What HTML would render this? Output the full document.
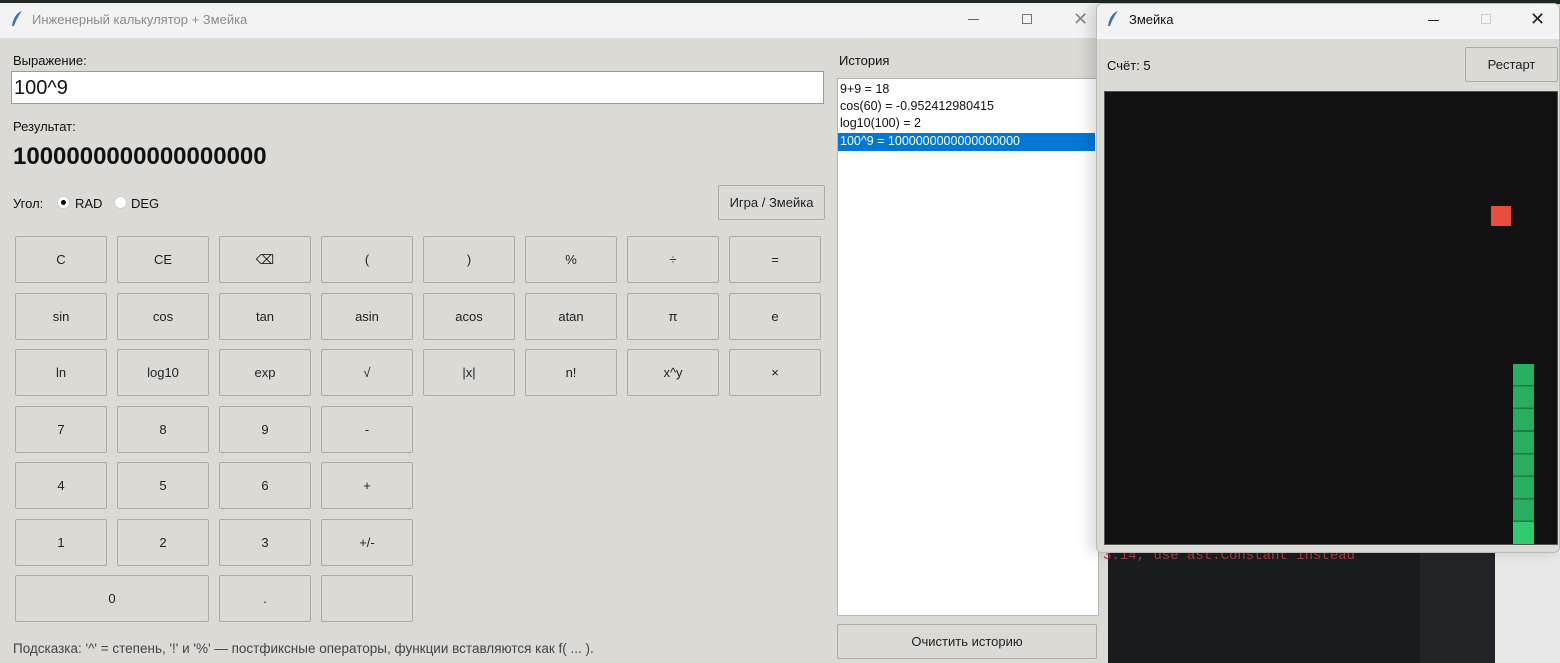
<!DOCTYPE html>
<html><head><meta charset="utf-8"><style>
*{margin:0;padding:0;box-sizing:border-box}
body{width:1560px;height:663px;overflow:hidden;position:relative;background:#dcdad5;font-family:"Liberation Sans","DejaVu Sans",sans-serif;font-size:13px;color:#111}
.a{position:absolute}
.b{position:absolute;width:92px;height:47px;border:1px solid #acaaa5;border-radius:2px;background:#dcdad5;display:flex;align-items:center;justify-content:center;font-size:13px;color:#222}
.t{white-space:nowrap}
</style></head><body>
<div class="a" style="left:0;top:0;width:1560px;height:4px;background:#1e2a22"></div>
<div class="a" style="left:0;top:3px;width:1108px;height:35px;background:#f3f3f3"></div>
<svg class="a" style="left:10px;top:10px" width="14" height="18"><path d="M12 1 C6 3 3 9 2 16 L4 16 C6 10 9 5 12 1Z" fill="#3a6fb0"/></svg>
<div class="a t" style="left:32px;top:12px;color:#8a8a8a;font-size:13px">Инженерный калькулятор + Змейка</div>
<div class="a" style="left:968px;top:19px;width:11px;height:1px;background:#666"></div>
<div class="a" style="left:1022px;top:14px;width:10px;height:10px;border:1px solid #777"></div>
<div class="a t" style="left:1073px;top:9px;font-size:18px;color:#888">✕</div>
<div class="a t" style="left:13px;top:53px">Выражение:</div>
<div class="a" style="left:11px;top:71px;width:813px;height:33px;background:#fff;border:1px solid #9c9a96"></div>
<div class="a t" style="left:14px;top:77px;font-size:20px">100^9</div>
<div class="a t" style="left:13px;top:119px">Результат:</div>
<div class="a t" style="left:13px;top:143px;font-size:24px;font-weight:bold">1000000000000000000</div>
<div class="a t" style="left:13px;top:196px">Угол:</div>
<div class="a" style="left:57px;top:196px;width:13px;height:13px;border-radius:50%;background:#fff;border:1px solid #ccc"></div>
<div class="a" style="left:61px;top:200px;width:5px;height:5px;border-radius:50%;background:#000"></div>
<div class="a t" style="left:75px;top:196px">RAD</div>
<div class="a" style="left:114px;top:196px;width:13px;height:13px;border-radius:50%;background:#fff;border:1px solid #ccc"></div>
<div class="a t" style="left:131px;top:196px">DEG</div>
<div class="b" style="left:718px;top:185px;width:107px;height:35px">Игра / Змейка</div>

<div class="b" style="left:15px;top:236px">C</div><div class="b" style="left:117px;top:236px">CE</div><div class="b" style="left:219px;top:236px">⌫</div><div class="b" style="left:321px;top:236px">(</div><div class="b" style="left:423px;top:236px">)</div><div class="b" style="left:525px;top:236px">%</div><div class="b" style="left:627px;top:236px">÷</div><div class="b" style="left:729px;top:236px">=</div>
<div class="b" style="left:15px;top:293px">sin</div><div class="b" style="left:117px;top:293px">cos</div><div class="b" style="left:219px;top:293px">tan</div><div class="b" style="left:321px;top:293px">asin</div><div class="b" style="left:423px;top:293px">acos</div><div class="b" style="left:525px;top:293px">atan</div><div class="b" style="left:627px;top:293px">π</div><div class="b" style="left:729px;top:293px">e</div>
<div class="b" style="left:15px;top:349px">ln</div><div class="b" style="left:117px;top:349px">log10</div><div class="b" style="left:219px;top:349px">exp</div><div class="b" style="left:321px;top:349px">√</div><div class="b" style="left:423px;top:349px">|x|</div><div class="b" style="left:525px;top:349px">n!</div><div class="b" style="left:627px;top:349px">x^y</div><div class="b" style="left:729px;top:349px">×</div>
<div class="b" style="left:15px;top:406px">7</div><div class="b" style="left:117px;top:406px">8</div><div class="b" style="left:219px;top:406px">9</div><div class="b" style="left:321px;top:406px">-</div>
<div class="b" style="left:15px;top:462px">4</div><div class="b" style="left:117px;top:462px">5</div><div class="b" style="left:219px;top:462px">6</div><div class="b" style="left:321px;top:462px">+</div>
<div class="b" style="left:15px;top:519px">1</div><div class="b" style="left:117px;top:519px">2</div><div class="b" style="left:219px;top:519px">3</div><div class="b" style="left:321px;top:519px">+/-</div>
<div class="b" style="left:15px;top:575px;width:194px">0</div><div class="b" style="left:219px;top:575px">.</div><div class="b" style="left:321px;top:575px"></div>
<div class="a t" style="left:13px;top:641px;color:#444;font-size:13.5px">Подсказка: '^' = степень, '!' и '%' — постфиксные операторы, функции вставляются как f( ... ).</div>

<div class="a t" style="left:839px;top:53px">История</div>
<div class="a" style="left:837px;top:78px;width:262px;height:538px;background:#fff;border:1px solid #b8b6b2"></div>
<div class="a t" style="left:840px;top:81px;line-height:17px;font-size:12.5px">9+9 = 18<br>cos(60) = -0.952412980415<br>log10(100) = 2</div>
<div class="a" style="left:838px;top:133px;width:257px;height:18px;background:#0078d7"></div>
<div class="a t" style="left:840px;top:134px;color:#fff;font-size:12.5px">100^9 = 1000000000000000000</div>
<div class="b" style="left:837px;top:624px;width:260px;height:35px">Очистить историю</div>

<div class="a" style="left:1108px;top:37px;width:452px;height:626px;background:#1b1c1f"></div>
<div class="a" style="left:1420px;top:550px;width:75px;height:113px;background:#232427"></div>
<div class="a" style="left:1495px;top:37px;width:65px;height:626px;background:#e8e8e8"></div>
<div class="a t" style="left:1103px;top:548px;color:#b03a3a;font-family:'Liberation Mono',monospace;font-size:14px">3.14, use ast.Constant instead</div>

<div class="a" style="left:1096px;top:3px;width:464px;height:550px;background:#dcdad5;border:1px solid #bbb;border-radius:6px;box-shadow:-6px 0 14px rgba(0,0,0,0.15);overflow:hidden">
<div class="a" style="left:0;top:0;width:464px;height:35px;background:#f3f3f3"></div>
</div>
<svg class="a" style="left:1106px;top:10px" width="14" height="18"><path d="M12 1 C6 3 3 9 2 16 L4 16 C6 10 9 5 12 1Z" fill="#3a6fb0"/></svg>
<div class="a t" style="left:1129px;top:12px">Змейка</div>
<div class="a" style="left:1428px;top:20px;width:11px;height:1px;background:#222"></div>
<div class="a" style="left:1481px;top:14px;width:10px;height:10px;border:1px solid #ccc"></div>
<div class="a t" style="left:1530px;top:9px;font-size:18px;color:#222">✕</div>
<div class="a t" style="left:1107px;top:58px">Счёт: 5</div>
<div class="b" style="left:1465px;top:47px;width:93px;height:35px">Рестарт</div>
<div class="a" style="left:1104px;top:91px;width:454px;height:454px;background:#111;border:1px solid #555"></div>
<div class="a" style="left:1491px;top:206px;width:20px;height:20px;background:#e74c3c"></div>
<div class="a" style="left:1513px;top:364px;width:21px;height:180px;background:repeating-linear-gradient(#27ae60 0 21px,#1e7a47 21px 22.6px)"></div>
<div class="a" style="left:1513px;top:522px;width:21px;height:22px;background:#2ecc71"></div>
</body></html>
